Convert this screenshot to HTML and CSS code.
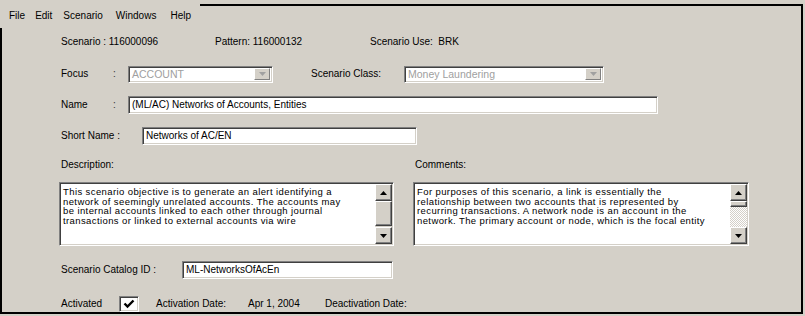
FILE: index.html
```html
<!DOCTYPE html>
<html>
<head>
<meta charset="utf-8">
<link rel="stylesheet" href="styles.css">
</head>
<body>
<div class="page">
  <div class="menubar">
    <span class="mi m-file">File</span>
    <span class="mi m-edit">Edit</span>
    <span class="mi m-scen">Scenario</span>
    <span class="mi m-win">Windows</span>
    <span class="mi">Help</span>
  </div>
  <div class="frame">
    <div class="row r-info">
      <span class="info-a">Scenario : 116000096</span>
      <span class="info-b">Pattern: 116000132</span>
      <span class="info-c">Scenario Use:&nbsp; BRK</span>
    </div>

    <div class="row r-focus">
      <span class="lbl-a">Focus</span>
      <span class="colon">:</span>
      <div class="combo combo-focus">
        <span class="combo-text">ACCOUNT</span>
        <span class="combo-btn"><svg width="7" height="4" viewBox="0 0 7 4"><path d="M0 0H7L3.5 4Z" fill="#a0a0a0"/></svg></span>
      </div>
      <span class="lbl-class">Scenario Class:</span>
      <div class="combo combo-class">
        <span class="combo-text">Money Laundering</span>
        <span class="combo-btn"><svg width="7" height="4" viewBox="0 0 7 4"><path d="M0 0H7L3.5 4Z" fill="#a0a0a0"/></svg></span>
      </div>
    </div>

    <div class="row r-name">
      <span class="lbl-a">Name</span>
      <span class="colon">:</span>
      <div class="field field-name">(ML/AC) Networks of Accounts, Entities</div>
    </div>

    <div class="row r-short">
      <span class="lbl-short">Short Name :</span>
      <div class="field field-short">Networks of AC/EN</div>
    </div>

    <div class="row r-labels">
      <span class="lbl-desc">Description:</span>
      <span>Comments:</span>
    </div>

    <div class="row r-areas">
      <div class="area area-desc">
        <div class="area-text">This scenario objective is to generate an alert identifying a<br>network of seemingly unrelated accounts. The accounts may<br>be internal accounts linked to each other through journal<br>transactions or linked to external accounts via wire</div>
        <div class="sb">
          <span class="sb-btn"><svg width="7" height="4" viewBox="0 0 7 4"><path d="M0 4H7L3.5 0Z" fill="#000"/></svg></span>
          <span class="sb-thumb thumb-desc"></span>
          <span class="sb-track"></span>
          <span class="sb-btn"><svg width="7" height="4" viewBox="0 0 7 4"><path d="M0 0H7L3.5 4Z" fill="#000"/></svg></span>
        </div>
      </div>
      <div class="area area-com">
        <div class="area-text">For purposes of this scenario, a link is essentially the<br>relationship between two accounts that is represented by<br>recurring transactions. A network node is an account in the<br>network. The primary account or node, which is the focal entity</div>
        <div class="sb">
          <span class="sb-btn"><svg width="7" height="4" viewBox="0 0 7 4"><path d="M0 4H7L3.5 0Z" fill="#000"/></svg></span>
          <span class="sb-thumb thumb-com"></span>
          <span class="sb-track dither"></span>
          <span class="sb-btn"><svg width="7" height="4" viewBox="0 0 7 4"><path d="M0 0H7L3.5 4Z" fill="#000"/></svg></span>
        </div>
      </div>
    </div>

    <div class="row r-cat">
      <span class="lbl-cat">Scenario Catalog ID :</span>
      <div class="field field-cat">ML-NetworksOfAcEn</div>
    </div>

    <div class="row r-act">
      <span class="lbl-act">Activated</span>
      <span class="check"><svg width="12" height="10" viewBox="0 0 12 10"><path d="M1.5 4.5L4.5 7.5L10.5 1.5" fill="none" stroke="#000" stroke-width="2.4"/></svg></span>
      <span class="lbl-adate">Activation Date:</span>
      <span class="lbl-apr">Apr 1, 2004</span>
      <span>Deactivation Date:</span>
    </div>
  </div>
</div>
</body>
</html>
```

FILE: styles.css
```css
html, body {
  margin: 0;
  padding: 0;
  background: #d4d0c8;
}
body {
  font-family: "Liberation Sans", Arial, sans-serif;
  font-size: 10px;
  color: #000;
  width: 805px;
  height: 316px;
  overflow: hidden;
}
.page {
  position: relative;
  width: 805px;
  height: 316px;
}
.menubar {
  position: absolute;
  left: 0;
  top: 0;
  width: 200px;
  height: 24px;
  background: #d4d0c8;
  display: flex;
  align-items: center;
  padding-left: 9px;
  box-sizing: border-box;
  z-index: 2;
}
.mi { margin-right: 9px; line-height: 12px; }
.m-file { margin-right: 10px; }
.m-edit { margin-right: 11px; }
.m-scen { margin-right: 13px; }
.m-win { margin-right: 14px; }

.frame {
  margin-top: 4px;
  width: 803px;
  height: 310px;
  box-sizing: border-box;
  border: 2px solid #000;
  background: #d4d0c8;
  display: flex;
  flex-direction: column;
  padding-left: 59px;
}
.row {
  display: flex;
  align-items: center;
  line-height: 12px;
  white-space: nowrap;
}
.r-info { height: 12px; margin-top: 30px; }
.info-a { width: 154px; }
.info-b { width: 155px; }

.r-focus { height: 16px; margin-top: 18px; }
.lbl-a { width: 52px; }
.colon { width: 15px; color: #333; }
.combo {
  box-sizing: border-box;
  height: 17px;
  background: #fff;
  border: 1px solid;
  border-color: #808080 #fff #fff #808080;
  box-shadow: inset 1px 1px 0 #404040, inset -1px -1px 0 #d4d0c8;
  display: flex;
  align-items: center;
  justify-content: space-between;
  padding: 0 2px 0 3px;
  color: #a0a0a0;
  font-size: 10.5px;
}
.combo-focus { width: 145px; }
.combo-class { width: 200px; }
.combo-btn {
  width: 16px;
  height: 12px;
  box-sizing: border-box;
  background: #d4d0c8;
  border: 1px solid;
  border-color: #fff #808080 #808080 #fff;
  display: flex;
  align-items: center;
  justify-content: center;
}
.lbl-class { margin-left: 38px; width: 93px; }

.field {
  box-sizing: border-box;
  background: #fff;
  border: 1px solid;
  border-color: #808080 #fff #fff #808080;
  box-shadow: inset 1px 1px 0 #404040, inset -1px -1px 0 #d4d0c8;
  padding: 0 3px;
  display: flex;
  align-items: center;
}
.r-name { height: 18px; margin-top: 14px; }
.field-name { width: 530px; height: 18px; }
.r-short { height: 18px; margin-top: 13px; }
.lbl-short { width: 81px; }
.field-short { width: 275px; height: 18px; }

.r-labels { height: 12px; margin-top: 14px; }
.lbl-desc { width: 354px; }

.r-areas { height: 65px; margin-top: 11px; margin-left: -2px; align-items: stretch; }
.area {
  box-sizing: border-box;
  background: #fff;
  border: 1px solid;
  border-color: #808080 #fff #fff #808080;
  box-shadow: inset 1px 1px 0 #404040, inset -1px -1px 0 #d4d0c8;
  display: flex;
  padding: 1px;
}
.area-desc { width: 335px; }
.area-com { width: 336px; margin-left: 19px; }
.area-text {
  flex: 1;
  white-space: nowrap;
  font-size: 9.5px;
  line-height: 9.5px;
  letter-spacing: 0.4px;
  padding: 3px 2px 0 2px;
  overflow: hidden;
}
.sb {
  width: 17px;
  display: flex;
  flex-direction: column;
  background: #d4d0c8;
}
.sb-btn {
  height: 17px;
  box-sizing: border-box;
  background: #d4d0c8;
  border: 1px solid;
  border-color: #fff #404040 #404040 #fff;
  box-shadow: inset -1px -1px 0 #808080;
  display: flex;
  align-items: center;
  justify-content: center;
}
.sb-thumb {
  box-sizing: border-box;
  background: #d4d0c8;
  border: 1px solid;
  border-color: #fff #404040 #404040 #fff;
  box-shadow: inset -1px -1px 0 #808080;
}
.thumb-desc { height: 25px; }
.thumb-com { height: 6px; }
.sb-track { flex: 1; background: #d4d0c8; }
.dither {
  background-color: #fff;
  background-image: repeating-conic-gradient(#d4d0c8 0 25%, #ffffff 0 50%);
  background-size: 2px 2px;
}

.r-cat { height: 17px; margin-top: 15px; }
.lbl-cat { width: 121px; }
.field-cat { width: 211px; height: 18px; }

.r-act { height: 16px; margin-top: 18px; }
.lbl-act { width: 58px; }
.check {
  box-sizing: border-box;
  width: 20px;
  height: 16px;
  background: #fff;
  border: 1px solid;
  border-color: #808080 #fff #fff #808080;
  box-shadow: inset 1px 1px 0 #404040, inset -1px -1px 0 #d4d0c8;
  display: flex;
  align-items: center;
  justify-content: center;
  margin-right: 17px;
}
.lbl-adate { width: 92px; }
.lbl-apr { width: 77px; }
```
